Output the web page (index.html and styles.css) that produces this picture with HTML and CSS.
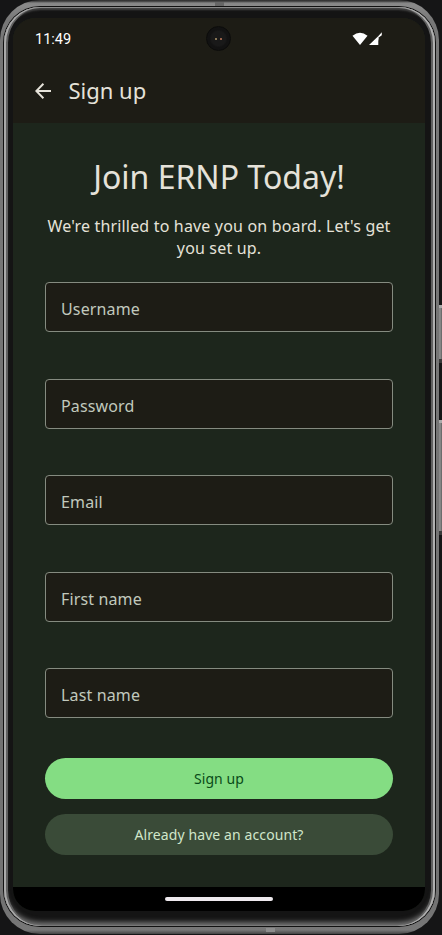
FILE: index.html
```html
<!DOCTYPE html>
<html lang="en">
<head>
<meta charset="utf-8">
<title>Sign up</title>
<link rel="stylesheet" href="styles.css">
</head>
<body>
<div class="device">
  <i class="side-key power"></i>
  <i class="side-key volume"></i>
  <div class="shell"><i class="antenna antenna-top"></i><i class="antenna antenna-bottom"></i><div class="rim"><div class="bezel">
    <div class="screen">
      <header class="top">
        <div class="status">
          <span class="clock">11:49</span>
          <svg class="signals" width="32" height="14" viewBox="0 0 32 14" fill="#fff"><path d="M.5 3.7Q8 -2 15.5 3.7L8 13Z"/><path d="M17 13 26.7 3.8V6.5Q26 9 26.3 13ZM26.4 4 29.8.2V3.2L27 5.2Z"/></svg>
        </div>
        <div class="appbar">
          <svg width="16" height="16" viewBox="0 0 16 16" fill="none" stroke="#e5e2d9" stroke-width="2"><path d="M16 8H1.5M8.4.8 1.3 8l7.1 7.2"/></svg>
          <span class="title">Sign up</span>
        </div>
      </header>
      <main class="content">
        <h1>Join ERNP Today!</h1>
        <p>We're thrilled to have you on board. Let's get<br>you set up.</p>
        <form class="fields">
          <div class="field"><span>Username</span></div>
          <div class="field"><span>Password</span></div>
          <div class="field"><span>Email</span></div>
          <div class="field"><span>First name</span></div>
          <div class="field"><span>Last name</span></div>
        </form>
        <div class="actions">
          <div class="button primary">Sign up</div>
          <div class="button tonal">Already have an account?</div>
        </div>
      </main>
      <footer class="navbar"><i class="handle"></i></footer>
      <i class="camera"></i>
    </div>
  </div></div></div>
</div>
</body>
</html>
```
FILE: styles.css
```css
* { box-sizing: border-box; }
body { margin: 0; width: 442px; height: 935px; overflow: hidden; background: #151516; font-family: "Noto Sans", sans-serif; color: #e5e2d9; }
.device { position: relative; width: 442px; height: 935px; }
.side-key { position: absolute; left: 438px; width: 4px; background: linear-gradient(90deg, #6b6b6b, #929292 50%, #5f5f5f); border-top: 3px solid #aaa; border-bottom: 4px solid #393939; }
.power { top: 305px; height: 58px; }
.volume { top: 420px; height: 115px; }
.shell { position: relative; width: 439px; height: 934px; padding: 6px 3px 7px; border-radius: 40px; background: linear-gradient(#333, #383838 1px, #858585 3px, #8a8a8a 5px, #777 20px, #727272 900px, #777 930px, #444); }
.antenna { position: absolute; width: 9px; height: 4px; }
.antenna-top { left: 215px; top: 2px; background: #666; }
.antenna-bottom { left: 266px; top: 928px; background: #8d8d8d; }
.rim { height: 921px; padding: 1px; border-radius: 37px; background: #111; }
.bezel { height: 919px; padding: 11px 6px 15px 9px; border-radius: 36px; background: #141414; box-shadow: inset 2px 0 #aaa, inset -2px 0 #b0b0b0, inset 0 1px #8a8a8a, inset 0 -1px #777, inset 4px 0 #606060, inset -4px 0 #606060, inset 0 3px 2px #444, inset 0 -4px 5px #737373; }
.screen { position: relative; width: 412px; height: 893px; border-radius: 22px; overflow: hidden; background: #1d261c; display: flex; flex-direction: column; }
.top { height: 105px; background: #1d1c15; }
.status { height: 42px; padding: 0 41px 0 22px; display: flex; align-items: center; justify-content: space-between; }
.clock { margin-top: 1px; font: 400 14.5px/20px Roboto, sans-serif; color: #fff; }
.signals { margin-top: -1px; }
.appbar { height: 62px; padding-left: 22px; display: flex; align-items: center; }
.title { margin: -2px 0 0 17.5px; font-size: 22px; line-height: 28px; }
.content { height: 764px; padding: 33px 32px 0; }
h1 { margin: 0; font-size: 32px; line-height: 42px; font-weight: 400; text-align: center; white-space: nowrap; }
p { margin: 17px 0 0; font-size: 16px; line-height: 22px; letter-spacing: .17px; text-align: center; white-space: nowrap; }
.fields { margin-top: 23px; display: grid; gap: 46.5px; }
.field { height: 50px; padding: 4px 15px 0; display: flex; align-items: center; border: 1px solid #858b80; border-radius: 4px; background: #1d1c15; color: #c1c9bd; font-size: 16px; letter-spacing: .14px; }
.actions { margin-top: 40px; display: grid; gap: 15.5px; }
.button { height: 40.5px; border-radius: 21px; display: flex; align-items: center; justify-content: center; font-size: 14px; letter-spacing: .1px; }
.primary { background: #84dd83; color: #094b18; }
.tonal { background: #3a4b38; color: #d0e6ca; }
.navbar { height: 24px; background: #000; display: flex; align-items: center; justify-content: center; }
.handle { width: 108px; height: 4px; border-radius: 2px; background: #eee9ee; }
.camera { position: absolute; left: 193px; top: 8px; width: 25px; height: 25px; border-radius: 50%; border: 1px solid #0c0c0b; background: radial-gradient(circle at 9px 12px, #8b7958 0 .7px, transparent 1.2px), radial-gradient(circle at 14px 12px, #99634c 0 .7px, transparent 1.2px), radial-gradient(circle, #191919 0 7px, #121212 9px); }
```
